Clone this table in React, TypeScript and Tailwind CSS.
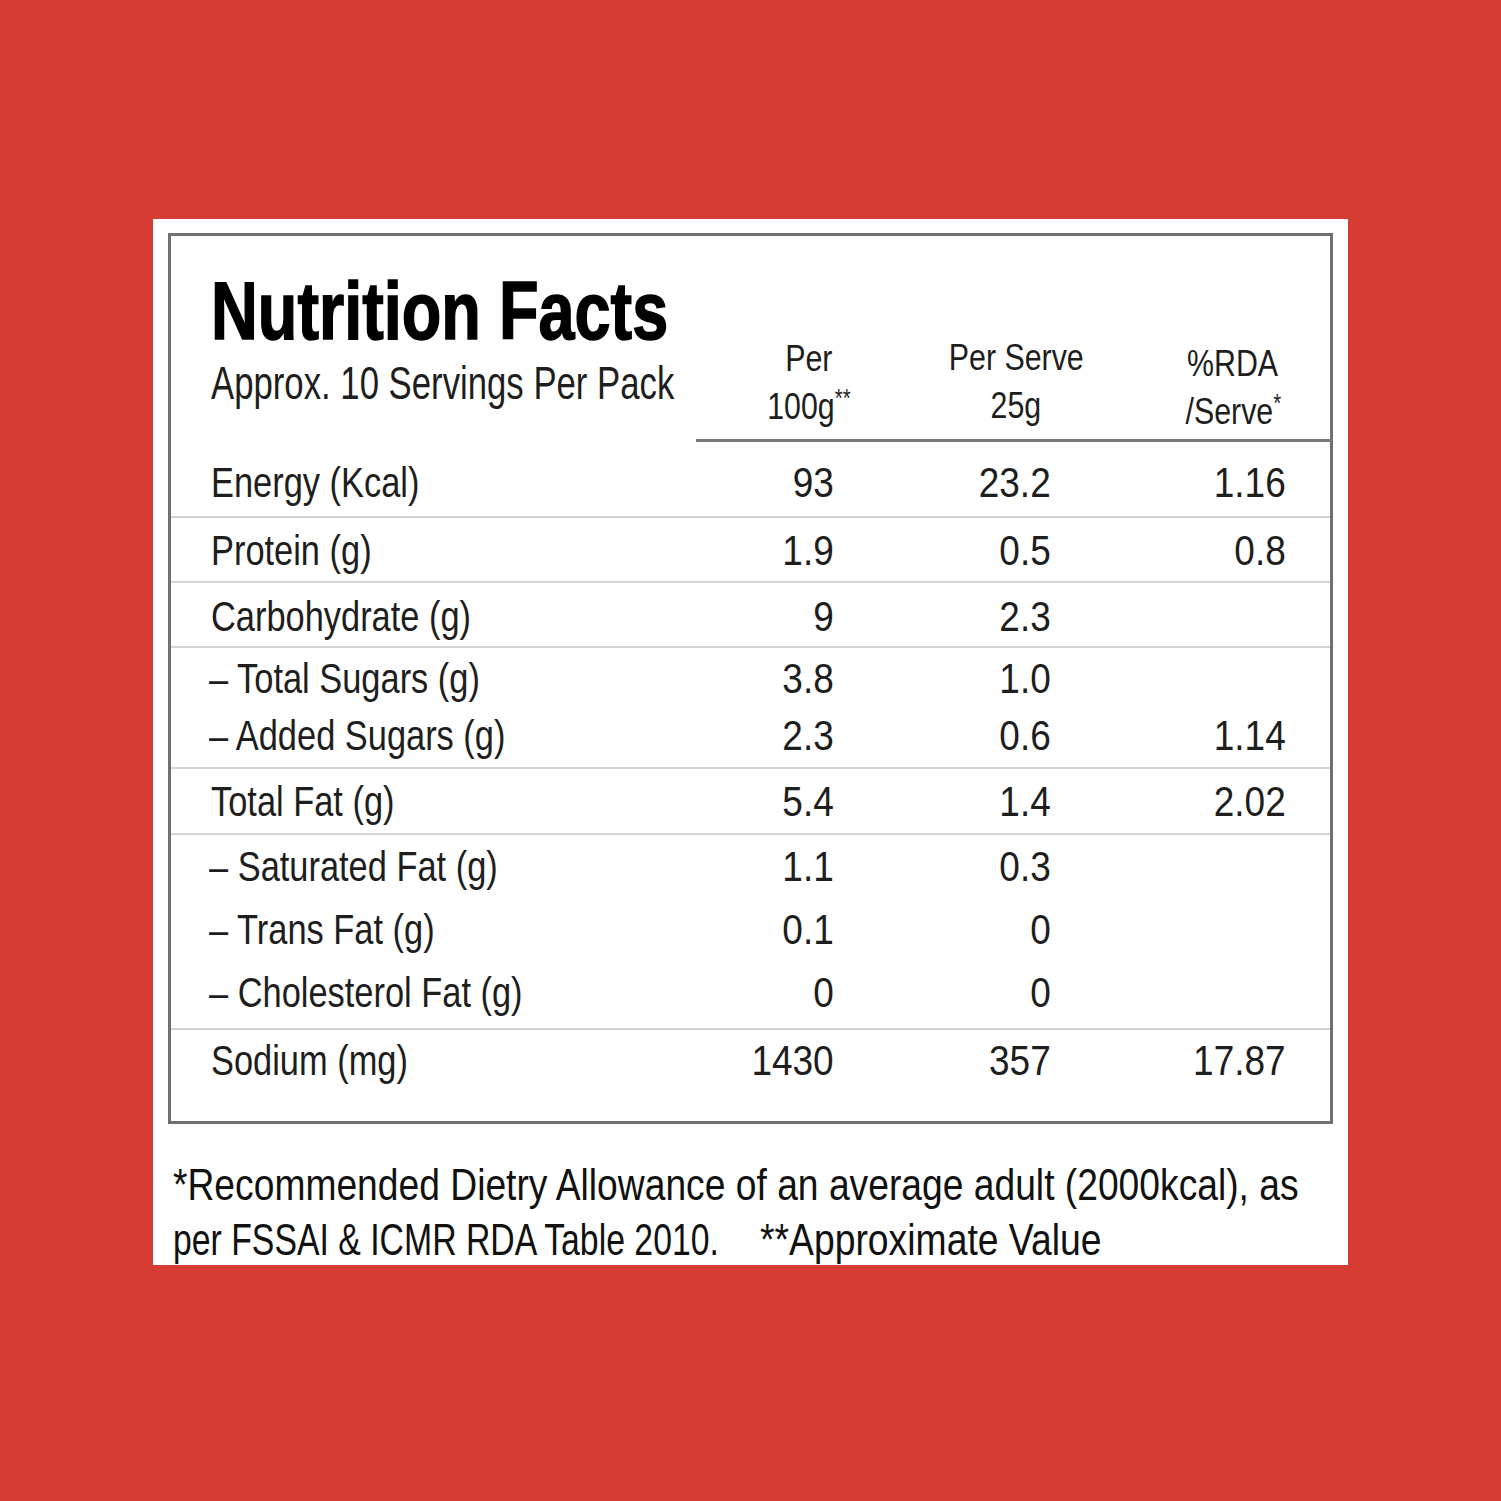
type Item = { label: string; sub?: boolean; a: string; b: string; c: string }

const rows: { group: Item[]; h: string; line: string }[] = [
  { group: [{ label: 'Energy (Kcal)', a: '93', b: '23.2', c: '1.16' }], h: 'h-[74px]', line: 'h-[74px] pt-[7px]' },
  { group: [{ label: 'Protein (g)', a: '1.9', b: '0.5', c: '0.8' }], h: 'h-[63px]', line: 'h-[63px] pt-[2px]' },
  { group: [{ label: 'Carbohydrate (g)', a: '9', b: '2.3', c: '' }], h: 'h-[63px]', line: 'h-[63px] pt-[3px]' },
  {
    group: [
      { label: '– Total Sugars (g)', sub: true, a: '3.8', b: '1.0', c: '' },
      { label: '– Added Sugars (g)', sub: true, a: '2.3', b: '0.6', c: '1.14' },
    ],
    h: 'h-[119px]',
    line: 'h-[57px] pt-[3px]',
  },
  { group: [{ label: 'Total Fat (g)', a: '5.4', b: '1.4', c: '2.02' }], h: 'h-[64px]', line: 'h-[64px]' },
  {
    group: [
      { label: '– Saturated Fat (g)', sub: true, a: '1.1', b: '0.3', c: '' },
      { label: '– Trans Fat (g)', sub: true, a: '0.1', b: '0', c: '' },
      { label: '– Cholesterol Fat (g)', sub: true, a: '0', b: '0', c: '' },
    ],
    h: 'h-[193px]',
    line: 'h-[63px]',
  },
  { group: [{ label: 'Sodium (mg)', a: '1430', b: '357', c: '17.87' }], h: 'h-[91px]', line: 'h-[60px]' },
]

// condensed look: the narrow face isn't installed, so squeeze Liberation Sans
function Label({ children }: { children: React.ReactNode }) {
  return <span className="inline-block whitespace-nowrap origin-left scale-x-[0.8]">{children}</span>
}

function Num({ children }: { children: React.ReactNode }) {
  return <span className="inline-block whitespace-nowrap origin-right scale-x-[0.86]">{children}</span>
}

function Row({ label, sub, a, b, c, line }: Item & { line: string }) {
  return (
    <div className={`flex items-center ${line}`}>
      <div className={`w-[525px] ${sub ? 'pl-[38px]' : 'pl-[40px]'}`}>
        <Label>{label}</Label>
      </div>
      <div className="w-[138px] text-right">
        <Num>{a}</Num>
      </div>
      <div className="w-[217px] text-right">
        <Num>{b}</Num>
      </div>
      <div className="w-[235px] text-right">
        <Num>{c}</Num>
      </div>
    </div>
  )
}

function Head({ children }: { children: React.ReactNode }) {
  return <span className="inline-block whitespace-nowrap scale-x-[0.82]">{children}</span>
}

export default function App() {
  return (
    <div className="w-[1501px] h-[1501px] bg-[#d63b34] pt-[219px] pl-[153px] font-['Liberation_Sans',Arial,sans-serif] text-[#1e1e1e]">
      <div className="w-[1195px] h-[1046px] bg-white overflow-hidden pt-[14px]">
        <div className="mx-[15px] border-[3px] border-[#707070]">
          {/* header */}
          <div className="flex">
            <div className="w-[525px] pl-[40px] pt-[35px] pb-[35px]">
              <h1 className="text-[81px] leading-[81px] font-bold text-black [-webkit-text-stroke:1.5px_black]">
                <Label>Nutrition Facts</Label>
              </h1>
              <p className="mt-[7px] text-[46px] leading-[48px]">
                <span className="inline-block whitespace-nowrap origin-left scale-x-[0.755]">Approx. 10 Servings Per Pack</span>
              </p>
            </div>
            <div className="flex flex-1 items-end border-b-[3px] border-[#787878] text-[37px] leading-[48px]">
              <div className="w-[226px] pb-[8px] text-center">
                <div>
                  <Head>Per</Head>
                </div>
                <div>
                  <Head>
                    100g<sup className="text-[25px]">**</sup>
                  </Head>
                </div>
              </div>
              <div className="w-[188px] pb-[9px] text-center">
                <div>
                  <Head>Per Serve</Head>
                </div>
                <div>
                  <Head>25g</Head>
                </div>
              </div>
              <div className="w-[222px] pl-[24px] pb-[3px] text-center">
                <div className="pt-[3px]">
                  <Head>%RDA</Head>
                </div>
                <div>
                  <Head>
                    /Serve<sup className="text-[25px]">*</sup>
                  </Head>
                </div>
              </div>
            </div>
          </div>

          {/* body */}
          <div className="text-[43px] leading-none">
            {rows.map((r, i) => (
              <div key={i} className={`${r.h} ${i < rows.length - 1 ? 'border-b-2 border-[#d4d4d4]' : ''} box-content`}>
                {r.group.map((g) => (
                  <Row key={g.label} {...g} line={r.line} />
                ))}
              </div>
            ))}
          </div>
        </div>

        <div className="pl-[20px] pt-[33px] text-[44px] leading-[55px] text-[#111]">
          <p>
            <span className="inline-block whitespace-nowrap origin-left scale-x-[0.846]">
              *Recommended Dietry Allowance of an average adult (2000kcal), as
            </span>
          </p>
          <div className="flex">
            <div className="w-[587px]">
              <span className="inline-block whitespace-nowrap origin-left scale-x-[0.768]">per FSSAI &amp; ICMR RDA Table 2010.</span>
            </div>
            <span className="inline-block whitespace-nowrap origin-left scale-x-[0.848]">**Approximate Value</span>
          </div>
        </div>
      </div>
    </div>
  )
}
